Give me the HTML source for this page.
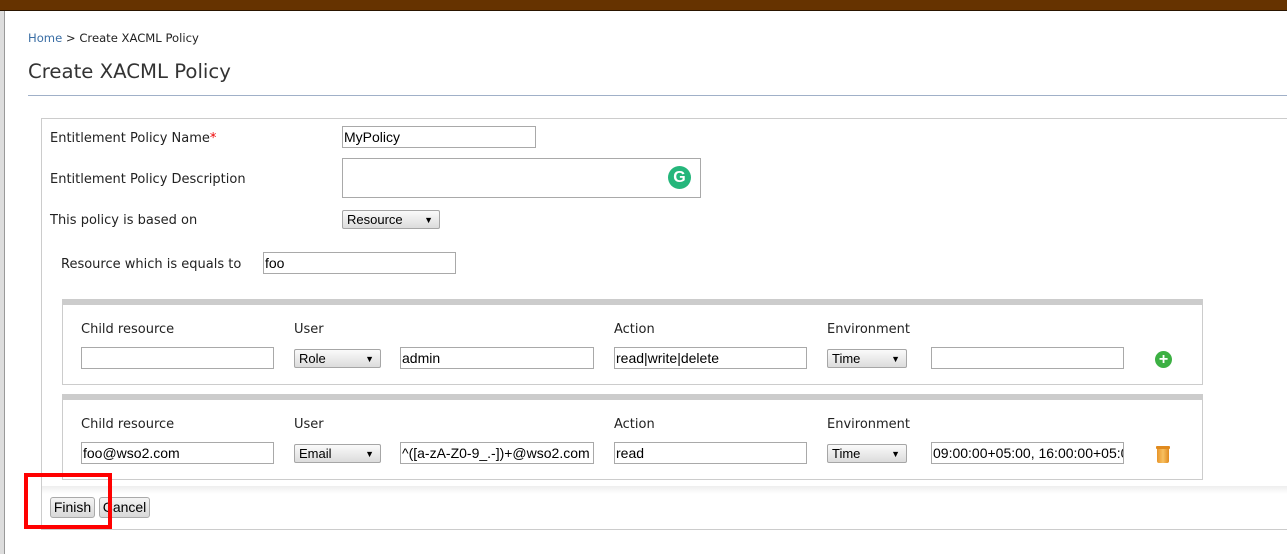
<!DOCTYPE html>
<html><head><meta charset="utf-8"><style>
*{box-sizing:border-box;margin:0;padding:0}
body{width:1287px;height:554px;background:#fff;position:relative;overflow:hidden;font-family:"DejaVu Sans",sans-serif;color:#222}
.a{position:absolute}
.lbl{position:absolute;font-size:13px;line-height:16px;white-space:nowrap}
.in{position:absolute;border:1px solid #a9a9a9;background:#fff;font-family:"Liberation Sans",sans-serif;font-size:14px;line-height:20px;padding-left:1px;white-space:nowrap;overflow:hidden;color:#000}
.sel{position:absolute;border:1px solid #a6a6a6;border-radius:2px;background:linear-gradient(#fafafa,#dcdcdc);font-family:"Liberation Sans",sans-serif;font-size:13px;line-height:18px;padding-left:4px;color:#000}
.sel:after{content:"▼";position:absolute;right:6px;top:0;font-size:9px}
.panel{position:absolute;left:62px;width:1141px;border:1px solid #ccc;border-top:6px solid #ccc;background:#fff}
.btn{position:absolute;top:497px;height:21px;border:1px solid #aaa;border-radius:3px;background:linear-gradient(#f4f4f4,#d8d8d8);font-family:"Liberation Sans",sans-serif;font-size:14px;line-height:19px;text-align:center;color:#000}
</style></head><body>
<div class="a" style="left:0;top:0;width:1287px;height:11px;background:#663300;border-bottom:1px solid #2a1500"></div>
<div class="a" style="left:0;top:11px;width:5px;height:543px;background:#ddd;border-right:1px solid #999"></div>
<div class="lbl" style="left:28px;top:30px;font-size:11.6px"><span style="color:#3a6ea5">Home</span> &gt; Create XACML Policy</div>
<div class="lbl" style="left:28px;top:60px;font-size:19.7px;line-height:24px;color:#333">Create XACML Policy</div>
<div class="a" style="left:28px;top:95px;width:1259px;height:1px;background:#a0b0c8"></div>

<div class="a" style="left:41px;top:118px;width:1250px;height:412px;border:1px solid #ccc;border-right:none"></div>
<div class="a" style="left:42px;top:486px;width:1245px;height:43px;background:linear-gradient(#eee,#fff 8px)"></div>

<div class="lbl" style="left:50px;top:131px">Entitlement Policy Name<span style="color:#e00">*</span></div>
<div class="in" style="left:342px;top:126px;width:194px;height:22px">MyPolicy</div>
<div class="lbl" style="left:50px;top:172px">Entitlement Policy Description</div>
<div class="in" style="left:342px;top:158px;width:359px;height:40px"></div>
<div class="a" style="left:668px;top:166px;width:23px;height:23px;border-radius:50%;background:#25b67b;color:#fff;font-family:'Liberation Sans',sans-serif;font-weight:bold;font-size:16px;line-height:23px;text-align:center">G</div>
<div class="lbl" style="left:50px;top:213px">This policy is based on</div>
<div class="sel" style="left:342px;top:210px;width:98px;height:19px">Resource</div>
<div class="lbl" style="left:61px;top:257px">Resource which is equals to</div>
<div class="in" style="left:263px;top:252px;width:193px;height:22px">foo</div>

<div class="panel" style="top:299px;height:86px"></div>
<div class="lbl" style="left:81px;top:322px">Child resource</div>
<div class="lbl" style="left:294px;top:322px">User</div>
<div class="lbl" style="left:614px;top:322px">Action</div>
<div class="lbl" style="left:827px;top:322px">Environment</div>
<div class="in" style="left:81px;top:347px;width:193px;height:22px"></div>
<div class="sel" style="left:294px;top:349px;width:87px;height:19px">Role</div>
<div class="in" style="left:400px;top:347px;width:194px;height:22px">admin</div>
<div class="in" style="left:614px;top:347px;width:193px;height:22px">read|write|delete</div>
<div class="sel" style="left:827px;top:349px;width:80px;height:19px">Time</div>
<div class="in" style="left:931px;top:347px;width:193px;height:22px"></div>
<div class="a" style="left:1155px;top:351px;width:17px;height:17px;border-radius:50%;background:#3cb043;color:#fff;font-family:'Liberation Sans',sans-serif;font-weight:bold;font-size:16px;line-height:17px;text-align:center">+</div>

<div class="panel" style="top:394px;height:86px"></div>
<div class="lbl" style="left:81px;top:417px">Child resource</div>
<div class="lbl" style="left:294px;top:417px">User</div>
<div class="lbl" style="left:614px;top:417px">Action</div>
<div class="lbl" style="left:827px;top:417px">Environment</div>
<div class="in" style="left:81px;top:442px;width:193px;height:22px">foo@wso2.com</div>
<div class="sel" style="left:294px;top:444px;width:87px;height:19px">Email</div>
<div class="in" style="left:400px;top:442px;width:194px;height:22px">^([a-zA-Z0-9_.-])+@wso2.com</div>
<div class="in" style="left:614px;top:442px;width:193px;height:22px">read</div>
<div class="sel" style="left:827px;top:444px;width:80px;height:19px">Time</div>
<div class="in" style="left:931px;top:442px;width:193px;height:22px">09:00:00+05:00, 16:00:00+05:00</div>
<div class="a" style="left:1156px;top:446px;width:14px;height:3px;background:#e08a1e;border-radius:1px"></div>
<div class="a" style="left:1157px;top:449px;width:12px;height:14px;background:linear-gradient(90deg,#e8952a,#f7c060,#e08a1e);border-radius:0 0 2px 2px"></div>

<div class="btn" style="left:50px;width:45px">Finish</div>
<div class="btn" style="left:99px;width:51px">Cancel</div>
<div class="a" style="left:24px;top:473px;width:88px;height:56px;border:4px solid #f00"></div>
</body></html>
